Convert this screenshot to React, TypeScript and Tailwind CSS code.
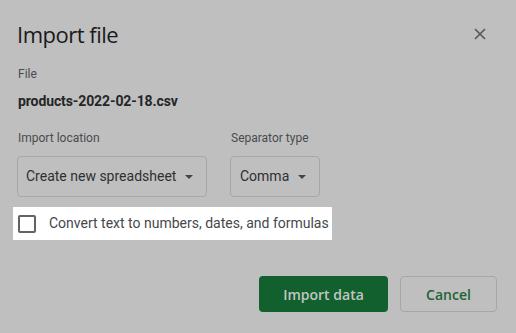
import React from "react";

function Caret() {
  return (
    <svg width="8" height="4" viewBox="0 0 8 4" className="shrink-0">
      <path d="M0 0 L8 0 L4 4 Z" fill="#444547" />
    </svg>
  );
}

export default function App() {
  return (
    <div
      className="w-[516px] h-[333px] bg-[#bfbfbf] flex flex-col px-[18px] overflow-hidden"
      style={{ fontFamily: "Roboto, 'Liberation Sans', sans-serif" }}
    >
      {/* header */}
      <div className="mt-[20px] h-[28px] flex items-center justify-between">
        <div
          className="text-[22px] leading-[28px] text-[#1a1a1c] tracking-[-0.5px] -ml-[1px]"
          style={{ fontFamily: "'Open Sans', sans-serif" }}
        >
          Import file
        </div>
        <div className="w-[24px] h-[24px] mr-[6px] flex items-center justify-center">
          <svg width="12" height="12" viewBox="0 0 12 12">
            <path d="M1 1 L11 11 M11 1 L1 11" stroke="#555658" strokeWidth="1.6" />
          </svg>
        </div>
      </div>

      <div className="mt-[18px] text-[12px] leading-[16px] text-[#4a4c4f]">File</div>
      <div className="mt-[9px] text-[14px] leading-[20px] font-bold text-[#252627] tracking-[-0.1px]">
        products-2022-02-18.csv
      </div>

      <div className="mt-[19px] flex gap-[24px]">
        <div className="flex flex-col">
          <div className="text-[12px] leading-[16px] text-[#4a4c4f]">Import location</div>
          <div className="mt-[10px] -ml-[1px] w-[190px] h-[41px] border border-[#a6a7a9] rounded-[4px] flex items-center pl-[8px] pr-[14px] gap-[9px]">
            <span className="text-[14px] text-[#2e2f31] whitespace-nowrap">Create new spreadsheet</span>
            <Caret />
          </div>
        </div>
        <div className="flex flex-col">
          <div className="text-[12px] leading-[16px] text-[#4a4c4f]">Separator type</div>
          <div className="mt-[10px] -ml-[1px] w-[90px] h-[41px] border border-[#a6a7a9] rounded-[4px] flex items-center pl-[9px] pr-[14px] gap-[9px]">
            <span className="text-[14px] text-[#2e2f31]">Comma</span>
            <Caret />
          </div>
        </div>
      </div>

      <div className="mt-[10px] -ml-[5px] w-[319px] h-[33px] bg-white flex items-center pl-[5px]">
        <div className="w-[18px] h-[18px] border-2 border-[#5f6368] rounded-[2px] shrink-0" />
        <span className="ml-[13px] text-[14px] text-[#45484b] whitespace-nowrap">
          Convert text to numbers, dates, and formulas
        </span>
      </div>

      <div className="mt-[36px] flex justify-end gap-[12px] mr-[1px]">
        <button
          className="w-[129px] h-[36px] rounded-[4px] bg-[#11602e] text-[#c2c6c3] text-[14px] font-semibold"
          style={{ fontFamily: "'Open Sans', sans-serif" }}
        >
          Import data
        </button>
        <button
          className="w-[97px] h-[36px] rounded-[4px] border border-[#a6a7a9] text-[#1c6434] text-[14px] font-semibold"
          style={{ fontFamily: "'Open Sans', sans-serif" }}
        >
          Cancel
        </button>
      </div>
    </div>
  );
}
